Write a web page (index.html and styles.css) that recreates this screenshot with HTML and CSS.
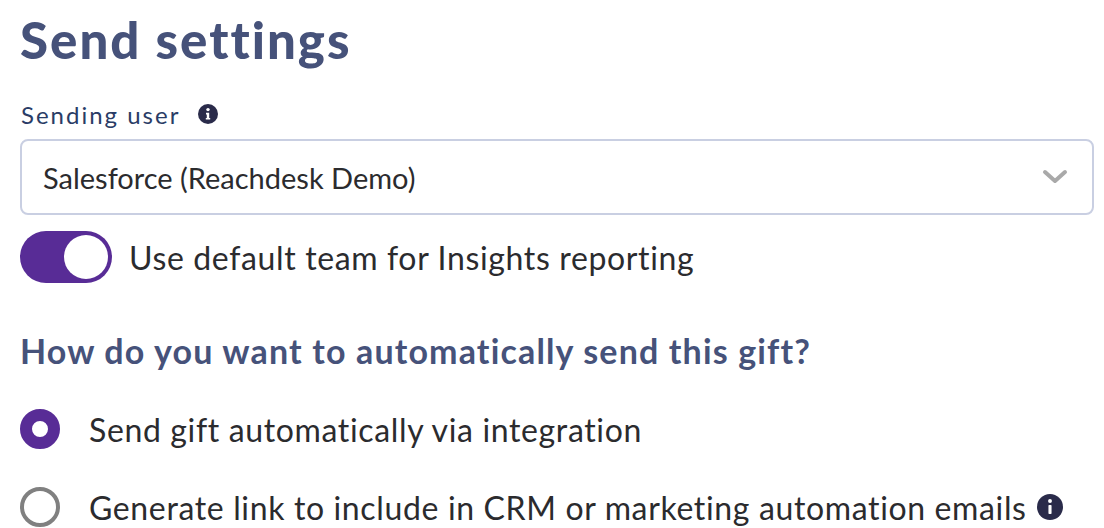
FILE: index.html
```html
<!DOCTYPE html>
<html lang="en">
<head>
    <meta charset="UTF-8">
    <title>Send settings</title>
    <link rel="stylesheet" href="styles.css">
</head>
<body>
    <div class="container">
        <h1 class="title">Send settings</h1>

        <div class="field-label">
            <span>Sending user</span>
            <svg class="info info-small" viewBox="0 0 20 20"><circle cx="10" cy="10" r="10" fill="#2a2b4a"/><circle cx="10" cy="5.6" r="1.7" fill="#fff"/><path d="M8 8.8h3.2v5.2h1v1.6H7.8V14h1v-3.6H8z" fill="#fff"/></svg>
        </div>

        <div class="select">
            <span>Salesforce (Reachdesk Demo)</span>
            <svg class="chevron" viewBox="0 0 26 16"><path d="M3 3l10 9 10-9" fill="none" stroke="#a9a9a9" stroke-width="4" stroke-linecap="round" stroke-linejoin="round"/></svg>
        </div>

        <div class="toggle-row">
            <div class="toggle"><div class="knob"></div></div>
            <span>Use default team for Insights reporting</span>
        </div>

        <h2 class="question">How do you want to automatically send this gift?</h2>

        <div class="radio-row radio-first">
            <div class="radio radio-on"></div>
            <span>Send gift automatically via integration</span>
        </div>
        <div class="radio-row radio-second">
            <div class="radio"></div>
            <span>Generate link to include in CRM or marketing automation emails</span>
            <svg class="info info-large" viewBox="0 0 20 20"><circle cx="10" cy="10" r="10" fill="#2a2b4a"/><circle cx="10" cy="5.4" r="1.5" fill="#fff"/><rect x="8.8" y="8.4" width="2.4" height="7" rx="0.6" fill="#fff"/></svg>
        </div>
    </div>
</body>
</html>
```

FILE: styles.css
```css
* {
    margin: 0;
    padding: 0;
    box-sizing: border-box;
}

html, body {
    height: 528px;
    overflow: hidden;
}

body {
    font-family: 'Lato', 'Liberation Sans', sans-serif;
    background: #fff;
    color: #2b2b2e;
}

.container {
    width: 1094px;
    padding-left: 20px;
}

.title {
    font-size: 51px;
    line-height: 56px;
    margin-top: 12px;
    font-weight: 900;
    color: #46527a;
    letter-spacing: 2px;
}

.field-label {
    display: flex;
    align-items: center;
    gap: 18px;
    margin-top: 31px;
    height: 30px;
    font-size: 24px;
    color: #2a3c66;
    letter-spacing: 2px;
    padding-left: 1px;
}

.info-small {
    width: 20px;
    height: 20px;
}

.select {
    display: flex;
    align-items: center;
    justify-content: space-between;
    height: 76px;
    margin-top: 10px;
    padding: 0 24px 0 21px;
    border: 2px solid #c9cfe2;
    border-radius: 8px;
    font-size: 29px;
}

.chevron {
    width: 26px;
    height: 16px;
}

.toggle-row {
    display: flex;
    align-items: center;
    gap: 17px;
    margin-top: 16px;
    font-size: 32px;
    letter-spacing: 0.64px;
}

.toggle {
    width: 92px;
    height: 52px;
    border-radius: 26px;
    background: #582c96;
    padding: 4px;
    display: flex;
    justify-content: flex-end;
}

.knob {
    width: 44px;
    height: 44px;
    border-radius: 50%;
    background: #fff;
}

.question {
    margin-top: 47px;
    font-size: 34px;
    line-height: 42px;
    font-weight: 700;
    color: #46527a;
    letter-spacing: 1.15px;
}

.radio-row {
    display: flex;
    align-items: center;
    font-size: 32px;
    letter-spacing: 0.64px;
}

.radio-first {
    margin-top: 37px;
}

.radio-second {
    margin-top: 38px;
}

.radio {
    width: 40px;
    height: 40px;
    border-radius: 50%;
    border: 4px solid #808080;
    margin-right: 29px;
}

.radio-on {
    border: 12px solid #582c96;
}

.info-large {
    width: 26px;
    height: 26px;
    margin-left: 10px;
}
```
